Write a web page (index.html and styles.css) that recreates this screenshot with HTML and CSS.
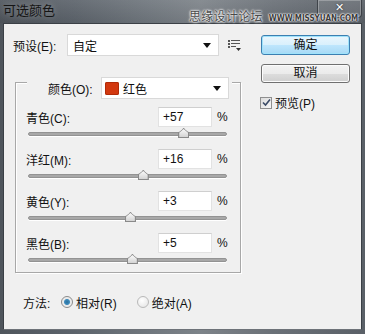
FILE: index.html
```html
<!DOCTYPE html>
<html lang="zh-CN">
<head>
    <meta charset="UTF-8">
    <title>可选颜色</title>
    <link rel="stylesheet" href="styles.css">
</head>
<body>
    <div class="window">
        <div class="titlebar">
            <div class="title">可选颜色</div>
            <div class="watermark"><span class="wm-cn">思缘设计论坛</span><span class="wm-en">WWW.MISSYUAN.COM</span></div>
            <div class="close">&#x2715;</div>
        </div>
        <div class="dialog">
            <div class="main">
                <div class="preset-row">
                    <span class="preset-label">预设(E):</span>
                    <div class="select preset-select">
                        <span class="select-text">自定</span>
                        <span class="arrow"></span>
                    </div>
                    <svg class="menu-icon" width="14" height="13" viewBox="0 0 14 13">
                        <rect x="0" y="1" width="2" height="2" fill="#555"/>
                        <rect x="3" y="1" width="9" height="1" fill="#555"/>
                        <rect x="0" y="4" width="2" height="2" fill="#555"/>
                        <rect x="3" y="4" width="9" height="1" fill="#555"/>
                        <rect x="0" y="7" width="2" height="2" fill="#555"/>
                        <rect x="3" y="7" width="5" height="1" fill="#555"/>
                        <path d="M8 9 L13 9 L10.5 12 Z" fill="#333"/>
                    </svg>
                </div>

                <div class="group">
                    <div class="group-head">
                        <span class="group-label">颜色(O):</span>
                        <div class="select color-select">
                            <span class="swatch"></span>
                            <span class="select-text">红色</span>
                            <span class="arrow"></span>
                        </div>
                    </div>
                    <div class="channels">
                        <div class="channel">
                            <div class="channel-top">
                                <span class="channel-label">青色(C):</span>
                                <div class="num-input">+57</div>
                                <span class="pct">%</span>
                            </div>
                            <div class="slider"><div class="track"><span class="thumb" style="left: 78.5%"></span></div></div>
                        </div>
                        <div class="channel">
                            <div class="channel-top">
                                <span class="channel-label">洋红(M):</span>
                                <div class="num-input">+16</div>
                                <span class="pct">%</span>
                            </div>
                            <div class="slider"><div class="track"><span class="thumb" style="left: 58%"></span></div></div>
                        </div>
                        <div class="channel">
                            <div class="channel-top">
                                <span class="channel-label">黄色(Y):</span>
                                <div class="num-input">+3</div>
                                <span class="pct">%</span>
                            </div>
                            <div class="slider"><div class="track"><span class="thumb" style="left: 51.5%"></span></div></div>
                        </div>
                        <div class="channel">
                            <div class="channel-top">
                                <span class="channel-label">黑色(B):</span>
                                <div class="num-input">+5</div>
                                <span class="pct">%</span>
                            </div>
                            <div class="slider"><div class="track"><span class="thumb" style="left: 52.5%"></span></div></div>
                        </div>
                    </div>
                </div>

                <div class="method-row">
                    <span class="method-label">方法:</span>
                    <span class="radio checked"></span>
                    <span class="radio-text">相对(R)</span>
                    <span class="radio"></span>
                    <span class="radio-text">绝对(A)</span>
                </div>
            </div>

            <div class="side">
                <div class="btn btn-default">确定</div>
                <div class="btn">取消</div>
                <div class="check-row">
                    <span class="checkbox">
                        <svg width="9" height="9" viewBox="0 0 9 9"><path d="M1 4.5 L3.5 7 L8 1.5" fill="none" stroke="#3a4a66" stroke-width="1.6"/></svg>
                    </span>
                    <span>预览(P)</span>
                </div>
            </div>
        </div>
    </div>
</body>
</html>
```

FILE: styles.css
```css
body {
    margin: 0;
    padding: 0;
    font-family: "Liberation Sans", "Noto Sans CJK SC", sans-serif;
    font-size: 12px;
    color: #111;
}
.window {
    width: 365px;
    height: 334px;
    display: flex;
    flex-direction: column;
    background: linear-gradient(90deg, #4f555c 0%, #5c636b 20%, #6f767d 40%, #7d8389 55%, #6a7077 75%, #5a6067 100%);
    overflow: hidden;
}
.titlebar {
    height: 23px;
    display: flex;
    align-items: flex-start;
    position: relative;
    background: linear-gradient(180deg, rgba(255,255,255,0.08), rgba(0,0,0,0.05));
}
.title {
    padding: 3px 0 0 3px;
    font-size: 13px;
    line-height: 16px;
    color: #151515;
    text-shadow: 0 0 6px rgba(255,255,255,0.35);
}
.watermark {
    position: absolute;
    left: 189px;
    top: 10px;
    display: flex;
    align-items: flex-end;
    gap: 6px;
}
.wm-cn {
    font-size: 12px;
    line-height: 14px;
    color: #4a4a4a;
    letter-spacing: 0.3px;
    text-shadow: 0 0 2px #fff, 0 0 2px #fff, 0 0 3px #fff;
}
.wm-en {
    font-family: "DejaVu Sans Condensed", "Liberation Sans", sans-serif;
    font-size: 8px;
    font-weight: bold;
    line-height: 10px;
    color: #3c3c3c;
    letter-spacing: 0;
    text-shadow: 0 0 1px #fff, 0 0 2px #fff, 0 0 2px #fff;
}
.close {
    margin-left: auto;
    margin-right: 3px;
    width: 43px;
    height: 17px;
    border: 1px solid rgba(40,45,50,0.7);
    border-top: none;
    border-radius: 0 0 4px 4px;
    box-shadow: inset 0 0 0 1px rgba(255,255,255,0.25);
    background: rgba(255,255,255,0.08);
    color: #fff;
    font-family: "DejaVu Sans", sans-serif;
    font-size: 11px;
    font-weight: bold;
    text-align: center;
    line-height: 15px;
    text-shadow: 0 0 2px #222;
}
.dialog {
    flex: 1;
    margin: 0 3px 4px 3px;
    background: #f0f0f0;
    border: 1px solid #3b4046;
    border-bottom-color: #6d7278;
    display: flex;
}
.main {
    width: 231px;
    padding: 10px 0 0 9px;
    display: flex;
    flex-direction: column;
}
.preset-row {
    display: flex;
    align-items: center;
    height: 22px;
}
.preset-label {
    width: 54px;
}
.select {
    height: 22px;
    box-sizing: border-box;
    background: #fff;
    border: 1px solid #d9d9d9;
    display: flex;
    align-items: center;
    padding: 0 7px 0 5px;
}
.select-text {
    flex: 1;
}
.arrow {
    width: 0;
    height: 0;
    border-left: 4px solid transparent;
    border-right: 4px solid transparent;
    border-top: 5px solid #111;
}
.preset-select {
    width: 152px;
}
.menu-icon {
    margin-left: 9px;
}
.group {
    margin: 26px 0 0 2px;
    width: 226px;
    box-sizing: border-box;
    border: 1px solid #a8a8a8;
    box-shadow: 1px 1px 0 #fff, inset 1px 1px 0 #fff;
    display: flex;
    flex-direction: column;
}
.group-head {
    align-self: flex-start;
    display: flex;
    align-items: center;
    margin: -6px 0 0 11px;
    padding: 0 3px 0 21px;
    background: #f0f0f0;
}
.group-label {
    width: 53px;
}
.color-select {
    width: 128px;
    padding-left: 3px;
}
.swatch {
    width: 14px;
    height: 13px;
    border-radius: 2px;
    background: #d2380f;
    box-shadow: inset 0 0 0 1px #b02a08;
    margin-right: 4px;
}
.channels {
    padding: 8px 0 0 10px;
}
.channel-top {
    display: flex;
    align-items: center;
    height: 20px;
}
.channel-label {
    width: 132px;
}
.num-input {
    width: 54px;
    height: 20px;
    box-sizing: border-box;
    background: #fff;
    border: 1px solid #e2e2e2;
    border-top-color: #cfcfcf;
    padding: 0 0 0 4px;
    line-height: 18px;
}
.pct {
    margin-left: 5px;
}
.slider {
    height: 22px;
    box-sizing: border-box;
    padding: 5px 0 0 2px;
}
.channel:last-child .slider {
    height: 19px;
}
.track {
    position: relative;
    width: 199px;
    height: 4px;
    box-sizing: border-box;
    border-radius: 2px;
    background: #a8a8a8;
    border: 1px solid #939393;
    box-shadow: 0 1px 0 #fff;
}
.thumb {
    position: absolute;
    top: -5px;
    width: 11px;
    height: 10px;
    margin-left: -5.5px;
    background: linear-gradient(180deg, #fafafa, #d4d4d4);
    border: 1px solid #8a8a8a;
    box-sizing: border-box;
    clip-path: polygon(50% 0, 100% 45%, 100% 100%, 0 100%, 0 45%);
}
.thumb::before {
    content: "";
    position: absolute;
    left: -1px;
    top: -1px;
    width: 11px;
    height: 10px;
    background: #8a8a8a;
    clip-path: polygon(50% 0, 100% 45%, 100% 100%, 0 100%, 0 45%, 10% 48%, 10% 90%, 90% 90%, 90% 48%, 50% 10%, 10% 48%, 0 45%);
}
.method-row {
    display: flex;
    align-items: center;
    height: 20px;
    margin-top: 19px;
    padding-left: 10px;
}
.method-label {
    width: 38px;
}
.radio {
    width: 12px;
    height: 12px;
    box-sizing: border-box;
    border-radius: 50%;
    border: 1px solid #b9b9b9;
    background: radial-gradient(circle at 40% 35%, #fff, #e2e2e2);
    margin-right: 3px;
}
.radio.checked {
    border-color: #8a8a8a;
    background: radial-gradient(circle, #2a6f9a 0, #3d8bbd 2.5px, #e9e9e9 3.5px, #f7f7f7 100%);
}
.radio-text {
    margin-right: 20px;
}
.side {
    margin-left: auto;
    margin-right: 11px;
    padding-top: 11px;
    width: 89px;
    display: flex;
    flex-direction: column;
}
.btn {
    height: 19px;
    box-sizing: border-box;
    border: 1px solid #707070;
    border-radius: 3px;
    background: linear-gradient(180deg, #f3f3f3 0%, #ebebeb 50%, #dddddd 51%, #cfcfcf 100%);
    box-shadow: inset 0 0 0 1px #fcfcfc;
    text-align: center;
    line-height: 17px;
    margin-top: 9px;
}
.btn-default {
    height: 20px;
    margin-top: 0;
    border-color: #3c7fb1;
    background: linear-gradient(180deg, #eaf6fd 0%, #d9f0fc 50%, #bee6fd 51%, #a7d9f5 100%);
    box-shadow: inset 0 0 0 1px #9fe3fb;
    line-height: 18px;
}
.check-row {
    display: flex;
    align-items: center;
    margin: 13px 0 0 -1px;
    height: 13px;
}
.checkbox {
    width: 12px;
    height: 12px;
    box-sizing: border-box;
    border: 1px solid #8f8f8f;
    background: linear-gradient(135deg, #dcdcdc, #f6f6f6);
    display: flex;
    align-items: center;
    justify-content: center;
    margin-right: 3px;
}
```
